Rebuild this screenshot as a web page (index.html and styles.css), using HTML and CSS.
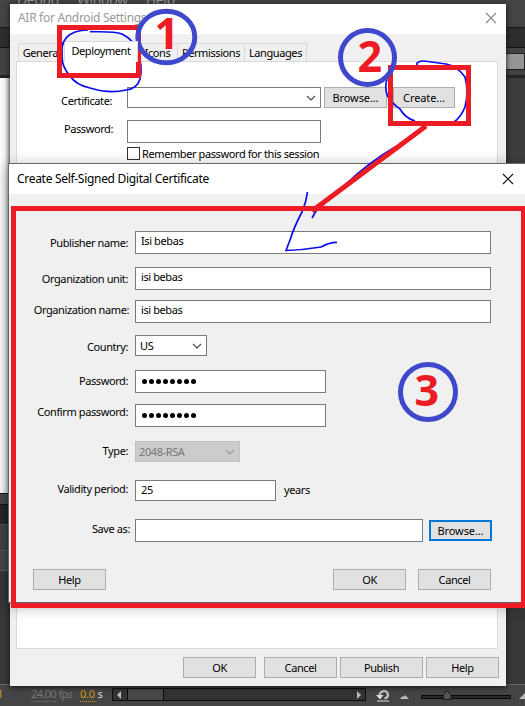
FILE: index.html
```
<!DOCTYPE html>
<html lang="en">
<head>
<meta charset="utf-8">
<title>AIR for Android Settings</title>
<link rel="stylesheet" href="styles.css">
</head>
<body>
<main class="desktop">
  <div class="app">
    <div class="menubar"><span>Debug</span><span>Window</span><span>Help</span></div>
    <div class="toolstrip"></div>
    <div class="options"><i class="search"></i></div>
    <div class="canvas"><i class="page"></i><i class="dock"></i></div>
    <div class="timeline-head"></div>
    <div class="timeline-dark"></div>
    <div class="ruler"></div>
    <div class="frames"></div>
    <div class="layers"></div>
    <div class="status">
      <span class="frame-no gold">1</span>
      <span class="fps"><u>24.00</u> fps</span>
      <span class="secs"><u class="gold">0.0</u> s</span>
      <span class="scrollbar"><i class="arrow left"></i><i class="thumb"></i><i class="arrow right"></i></span>
      <svg class="tools" width="149" height="20" viewBox="376 686 149 20">
        <path d="M379.500 696.500C379 690 388 689 388 695Q388 698 384.500 698.500" fill="none" stroke="#c4c4c4" stroke-width="2.200"/>
        <path d="M376 695h7.500l-3.500 4.500zM377 700.500h12v1h-12z" fill="#ddd"/>
        <path d="M400 699l2.500-3 1 1 1.500-2 4 4z" fill="#bbb"/>
        <path d="M421.500 695.500h89v3h-89z" fill="#292929" stroke="#080808"/>
        <path d="M443.500 699.500v-5l3.500-4 4 4v5z" fill="#555" stroke="#161616"/>
        <path d="M519 699l6-6v6z" fill="#bbb"/>
      </svg>
    </div>
  </div>

  <section class="window settings">
    <header class="titlebar muted"><span class="title">AIR for Android Settings</span>
      <svg class="close" width="12" height="12" viewBox="0 0 12 12"><path d="M1 1l10 10M11 1L1 11"/></svg></header>
    <nav class="tabs">
      <span class="tab general">General</span><span class="tab active">Deployment</span><span class="tab icons">Icons</span><span class="tab permissions">Permissions</span><span class="tab languages">Languages</span>
    </nav>
    <div class="panel">
      <div class="cert-row"><label>Certificate:</label>
        <span class="field select"><svg width="10" height="6" viewBox="0 0 10 6"><path d="M1 1l4 4 4-4"/></svg></span>
        <button class="btn browse">Browse...</button><button class="btn create">Create...</button></div>
      <div class="pass-row"><label>Password:</label><span class="field"></span></div>
      <div class="check-row"><i class="checkbox"></i><span>Remember password for this session</span></div>
    </div>
    <footer class="settings-buttons"><button class="btn">OK</button><button class="btn">Cancel</button><button class="btn publish">Publish</button><button class="btn">Help</button></footer>
  </section>

  <section class="window dialog">
    <header class="titlebar"><span class="title">Create Self-Signed Digital Certificate</span>
      <svg class="close" width="12" height="12" viewBox="0 0 12 12"><path d="M1 1l10 10M11 1L1 11"/></svg></header>
    <div class="form">
      <div class="row publisher"><label>Publisher name:</label><span class="field">Isi bebas</span></div>
      <div class="row unit"><label>Organization unit:</label><span class="field">isi bebas</span></div>
      <div class="row org"><label>Organization name:</label><span class="field">isi bebas</span></div>
      <div class="row country"><label>Country:</label><span class="field select">US<svg width="10" height="6" viewBox="0 0 10 6"><path d="M1 1l4 4 4-4"/></svg></span></div>
      <div class="row pass"><label>Password:</label><span class="field dots"><i></i><i></i><i></i><i></i><i></i><i></i><i></i><i></i></span></div>
      <div class="row confirm"><label>Confirm password:</label><span class="field dots"><i></i><i></i><i></i><i></i><i></i><i></i><i></i><i></i></span></div>
      <div class="row type"><label>Type:</label><span class="field select disabled">2048-RSA<svg width="10" height="6" viewBox="0 0 10 6"><path d="M1 1l4 4 4-4"/></svg></span></div>
      <div class="row validity"><label>Validity period:</label><span class="field">25</span><span class="unit-text">years</span></div>
      <div class="row save"><label>Save as:</label><span class="field"></span><button class="btn focus">Browse...</button></div>
    </div>
    <footer class="dialog-buttons"><button class="btn help">Help</button><button class="btn">OK</button><button class="btn">Cancel</button></footer>
  </section>

  <svg class="marks" width="525" height="706" viewBox="0 0 525 706">
    <g class="pen">
      <path d="M90 31.700C103 32 114 31 122 34Q134 40 138 52Q143 67 140 79Q137 89 126 90Q109 94 90 88Q76 85 70 76Q62 67 62 57V47Q64 36 75 32Q81 30 88 30"/>
      <path d="M417 70V63Q420 60 428 61.500L446 64Q457 66 465 77Q469 91 465 107Q461 117 454 122M387 79Q384 88 388 97Q394 105 400 109Q405 118 415 121"/>
      <path d="M395 147Q368 163 345 185M325 203L316 211 312 218M307.500 192Q306 203 302 212Q294 227 290 240L286 250.500Q303 250 321 247Q331 242 337 242.500"/>
    </g>
    <g class="frames-red">
      <path d="M59.500 27.500h79v48h-79z"/><path d="M390.500 67.500h78v56h-78z"/><path d="M13.500 208.500h510v397h-510z"/><path d="M426 126L312 211"/>
    </g>
    <g class="rings"><ellipse cx="166.300" cy="37" rx="28.500" ry="25.800"/><circle cx="367.500" cy="57.500" r="27"/><circle cx="428" cy="392" r="27.500"/></g>
    <g class="numbers"><text x="154.500" y="49">1</text><text x="357.500" y="72">2</text><text x="414.500" y="405.500">3</text></g>
  </svg>
</main>
</body>
</html>
```
FILE: styles.css
```
* { box-sizing: border-box; }
body { margin: 0; font: 11px/14px "Noto Sans", "Open Sans", sans-serif; letter-spacing: -.4px; color: #000; }
i { display: block; flex: none; }
label { text-align: right; white-space: nowrap; flex: none; }
.desktop { position: relative; width: 525px; height: 706px; overflow: hidden; background: #424242; }

.app { display: flex; flex-direction: column; height: 706px; }
.menubar { height: 28px; background: #444; border-bottom: 1px solid #151515; color: #999; display: flex; gap: 18px; padding-left: 17px; font-size: 14px; line-height: 10px; }
.menubar span { margin-top: -5px; }
.toolstrip { height: 20px; background: #2d2d2d; border-bottom: 1px solid #111; }
.options { height: 30px; background: #424242; border-bottom: 3px solid #252525; display: flex; justify-content: flex-end; padding-top: 5px; }
.search { width: 20px; height: 17px; border: 1px solid #222; background: #969696; }
.canvas { height: 415px; display: flex; justify-content: space-between; }
.page { width: 250px; background: linear-gradient(90deg, #fff 0, #eee 5px, #ccc 10px); }
.dock { width: 100px; background: #3d3d3d; }
.timeline-head { height: 12px; background: #494949; border-top: 1px solid #111; border-bottom: 1px solid #111; }
.timeline-dark { height: 20px; background: #262626; border-bottom: 1px solid #555; }
.ruler { height: 26px; background: #444; border-bottom: 1px solid #5c5c5c; }
.frames { height: 20px; background: #484848; border-bottom: 1px solid #5c5c5c; }
.layers { height: 113px; background: #373737; }
.status { height: 22px; background: #444; border-top: 1px solid #666; display: flex; color: #777; font-size: 11px; letter-spacing: -.2px; padding-top: 1px; }
.status u { text-decoration: none; border-bottom: 1px dotted; padding-bottom: 0; }
.status .gold { color: #d39b10; }
.frame-no { width: 31px; margin-left: -3px; }
.frame-no, .fps, .secs { padding-top: 1px; flex: none; white-space: nowrap; }
.fps { width: 52px; margin-left: 3px; letter-spacing: -.7px; }
.fps { letter-spacing: -.6px; }
.secs { width: 29px; margin-left: -3px; color: #ddd; }
.scrollbar { width: 254px; height: 13px; margin: 2px 0 0 3px; background: #333; border: 1px solid #0c0c0c; display: flex; align-items: center; flex: none; }
.arrow { border: 4px solid transparent; }
.arrow.left { border-right: 4px solid #bbb; border-left: 0; margin: 0 6px 0 4px; }
.arrow.right { border-left: 4px solid #bbb; border-right: 0; margin: 0 4px 0 auto; }
.thumb { width: 37px; height: 13px; background: #484848; border: 1px solid #080808; }
.tools { margin-left: 10px; flex: none; }

.window { position: absolute; background: #f0f0f0; display: flex; flex-direction: column; }
.titlebar { background: #fff; height: 30px; flex: none; display: flex; align-items: center; justify-content: space-between; font-size: 12px; letter-spacing: -.3px; }
.title { white-space: nowrap; }
.close { fill: none; stroke: #111; stroke-width: 1.1; }
.muted { color: #999; }
.muted .close { stroke: #888; }
.settings { left: 10px; top: 4px; width: 496px; height: 682px; box-shadow: 0 1px 5px #111; }
.settings .titlebar { padding: 0 9px 2px 8px; }
.tabs { height: 27px; display: flex; align-items: flex-end; padding-left: 8px; flex: none; }
.tab { height: 18px; border: 1px solid #d9d9d9; border-bottom: 0; padding-top: 2px; text-align: center; white-space: nowrap; border-left-width: 0; }
.general { width: 47px; border-left-width: 1px; }
.active { width: 73px; height: 21px; background: #fff; margin-bottom: -1px; z-index: 1; }
.icons { width: 40px; }
.permissions { width: 67px; }
.languages { width: 62px; }
.panel { width: 482px; height: 588px; margin-left: 6px; border: 1px solid #d9d9d9; background: #fff; padding: 25px 0 0 0; flex: none; }
.cert-row { display: flex; height: 21px; margin-bottom: 12px; }
.cert-row label { width: 95px; padding-top: 7px; }
.cert-row .field { width: 194px; height: 21px; margin-left: 15px; justify-content: flex-end; }
.pass-row { display: flex; height: 23px; }
.pass-row label { width: 96px; padding-top: 2px; }
.pass-row .field { width: 194px; margin-left: 14px; }
.check-row { display: flex; margin: 4px 0 0 110px; gap: 2px; }
.checkbox { width: 13px; height: 13px; border: 1px solid #333; }
.field { display: flex; background: #fff; border: 1px solid #7a7a7a; flex: none; white-space: nowrap; padding: 2px 5px; height: 23px; }
.select { align-items: center; justify-content: space-between; padding: 0 4px; }
.select svg { fill: none; stroke: #444; stroke-width: 1.1; }
.btn { font: inherit; letter-spacing: inherit; color: inherit; background: #e1e1e1; border: 1px solid #adadad; height: 21px; width: 73px; padding: 0; flex: none; }
.browse { width: 63px; margin-left: 3px; }
.create { width: 62px; margin-left: 6px; }
.browse, .create, .focus { letter-spacing: -.1px; }
.settings-buttons { display: flex; margin: 8px 0 0 173px; }
.settings-buttons .btn:nth-child(2) { margin-left: 8px; }
.settings-buttons .btn:nth-child(n+3) { margin-left: 3px; }
.settings-buttons .publish { width: 83px; }

.dialog { left: 8px; top: 163px; width: 518px; height: 440px; border: 1px solid #686868; box-shadow: 0 3px 14px #0005; }
.dialog .titlebar { padding: 0 11px 0 8px; }
.form { padding-top: 37px; height: 375px; flex: none; }
.row { display: flex; height: 23px; }
.row label { width: 119px; }
.row .field { margin-left: 7px; width: 356px; }
.publisher label { padding-top: 5px; }
.unit { margin-top: 13px; }
.unit label { padding-top: 5px; }
.org { margin-top: 10px; }
.org label { padding-top: 3px; width: 120px; }
.row.org .field { margin-left: 6px; }
.country { margin-top: 12px; }
.country label { padding-top: 5px; }
.row.country .field { width: 72px; height: 21px; }
.pass { margin-top: 12px; }
.pass label { padding-top: 4px; }
.row .dots { width: 191px; gap: 2px; padding: 8px 6px; }
.dots i { width: 5px; height: 5px; border-radius: 50%; background: #000; }
.confirm { margin-top: 11px; }
.confirm label { padding-top: 1px; }
.type { margin-top: 14px; }
.type label { padding-top: 3px; }
.row.type .field { width: 105px; height: 21px; background: #ccc; border-color: #bfbfbf; color: #777; padding-left: 3px; }
.row.type svg { stroke: #999; }
.validity { margin-top: 16px; }
.validity label { padding-top: 2px; }
.row.validity .field { width: 141px; height: 21px; }
.unit-text { margin: 3px 0 0 8px; }
.save { margin-top: 16px; }
.save label { width: 121px; padding-top: 3px; }
.row.save .field { width: 288px; margin-left: 5px; }
.focus { width: 63px; margin: 1px 0 0 6px; border: 2px solid #0078d7; }
.dialog-buttons { display: flex; padding-left: 24px; gap: 12px; }
.help { margin-right: 215px; }

.marks { position: absolute; left: 0; top: 0; }
.pen { fill: none; stroke: #0a0aef; stroke-width: 1.7; }
.frames-red { fill: none; stroke: #ed1c24; stroke-width: 5; }
.rings { fill: none; stroke: #3f48cc; stroke-width: 5; }
.numbers { font: bold 43px "Open Sans", sans-serif; letter-spacing: 0; fill: #ed1c24; }
```
